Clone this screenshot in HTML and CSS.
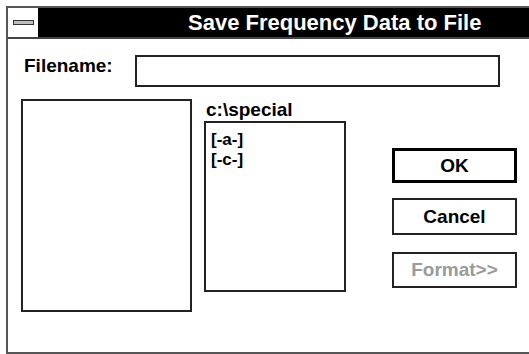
FILE: index.html
```html
<!DOCTYPE html>
<html>
<head>
<meta charset="utf-8">
<link rel="stylesheet" href="styles.css">
</head>
<body>
<div class="window">
  <div class="titlebar">
    <div class="sysmenu"><span class="dash"></span></div>
    <div class="title">Save Frequency Data to File</div>
  </div>
  <div class="content">
    <div class="filerow">
      <label class="fname-label">Filename:</label>
      <div class="fname-input"></div>
    </div>
    <div class="main">
      <div class="dirlist"></div>
      <div class="middle">
        <div class="path">c:\special</div>
        <div class="filelist">
          <div class="item">[-a-]</div>
          <div class="item">[-c-]</div>
        </div>
      </div>
      <div class="buttons">
        <div class="btn btn-ok">OK</div>
        <div class="btn btn-cancel">Cancel</div>
        <div class="btn btn-format">Format&gt;&gt;</div>
      </div>
    </div>
  </div>
</div>
</body>
</html>
```
FILE: styles.css
```css
html, body {
  margin: 0;
  padding: 0;
  background: #fff;
  overflow: hidden;
}
body {
  font-family: "Liberation Sans", Arial, sans-serif;
  font-weight: bold;
  color: #000;
}
.window {
  margin: 6px 0 0 6px;
  width: 523px;
  height: 348px;
  box-sizing: border-box;
  border: 2px solid #555;
  border-right: none;
  display: flex;
  flex-direction: column;
}
.titlebar {
  display: flex;
  height: 31px;
  box-sizing: border-box;
  border-bottom: 2px solid #444;
}
.sysmenu {
  width: 30px;
  display: flex;
  align-items: center;
  justify-content: center;
  background: #fff;
}
.dash {
  display: block;
  width: 21px;
  height: 5px;
  box-sizing: border-box;
  border: 1px solid #333;
  background: #bdbdbd;
}
.title {
  flex: 1;
  background: #000;
  color: #fff;
  font-size: 22px;
  display: flex;
  align-items: center;
  padding-left: 150px;
  white-space: nowrap;
}
.content {
  padding: 16px 0 0 13px;
}
.filerow {
  display: flex;
  align-items: flex-start;
}
.fname-label {
  width: 111px;
  padding-left: 3px;
  font-size: 19px;
  line-height: 22px;
}
.fname-input {
  width: 365px;
  height: 32px;
  box-sizing: border-box;
  border: 2px solid #222;
}
.main {
  display: flex;
  margin-top: 12px;
  align-items: flex-start;
}
.dirlist {
  width: 171px;
  height: 213px;
  box-sizing: border-box;
  border: 2px solid #222;
}
.middle {
  margin-left: 12px;
}
.path {
  font-size: 19px;
  line-height: 20px;
  padding: 1px 0 0 2px;
  margin-bottom: 1px;
}
.filelist {
  width: 142px;
  height: 171px;
  box-sizing: border-box;
  border: 2px solid #222;
  padding: 7px 0 0 5px;
}
.item {
  font-size: 17px;
  line-height: 19.5px;
}
.buttons {
  margin-left: 46px;
  margin-top: 49px;
  display: flex;
  flex-direction: column;
}
.btn {
  width: 125px;
  box-sizing: border-box;
  border: 2px solid #222;
  display: flex;
  align-items: center;
  justify-content: center;
  font-size: 19px;
}
.btn-ok {
  height: 35px;
  border: 3px solid #000;
}
.btn-cancel {
  height: 37px;
  margin-top: 15px;
}
.btn-format {
  height: 36px;
  margin-top: 17px;
  color: #9a9a9a;
}
```
